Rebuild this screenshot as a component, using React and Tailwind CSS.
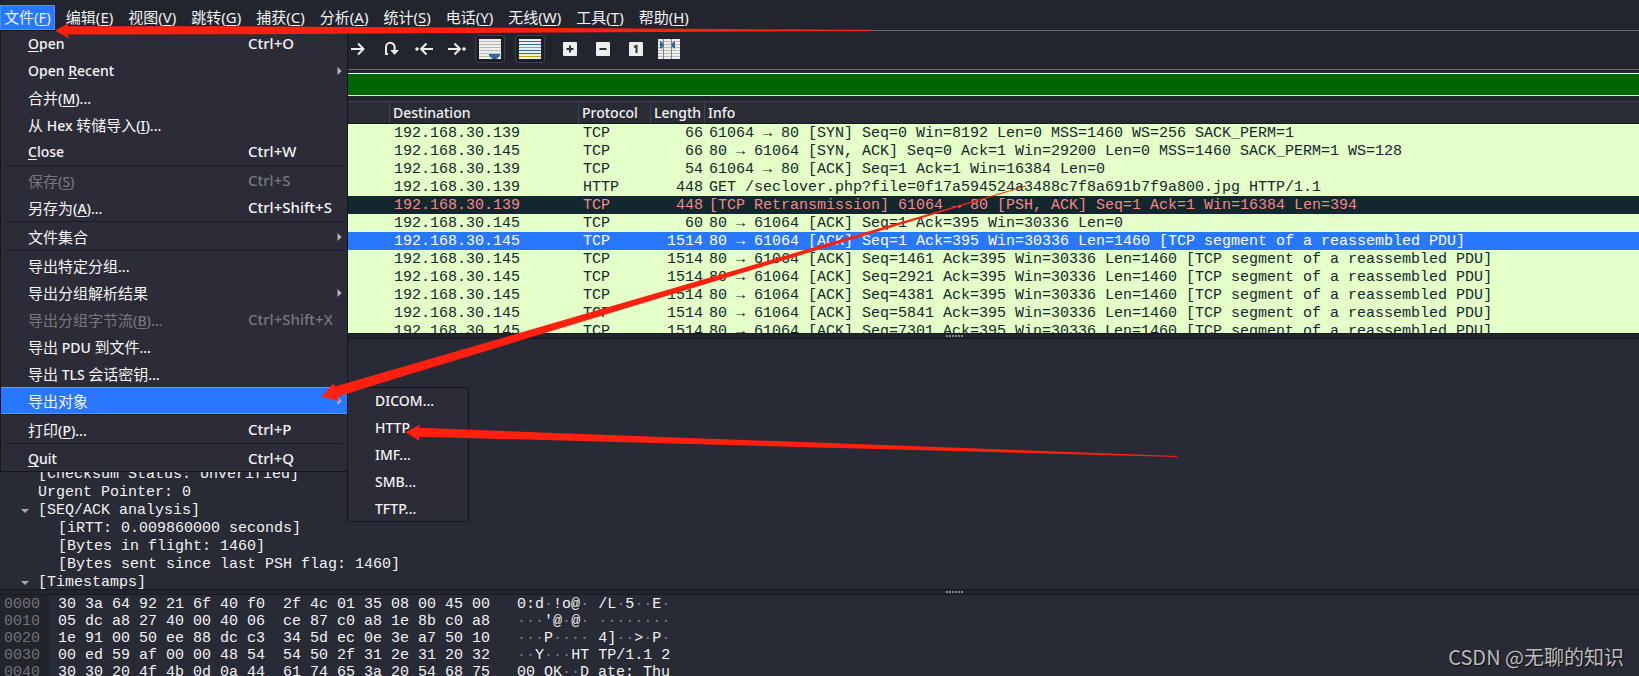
import React from "react";

const UI = "font-['Noto_Sans','Noto_Sans_CJK_SC',sans-serif]";
const MONO = "font-['Liberation_Mono','Noto_Sans_CJK_SC',monospace]";

const menus = [
  ["文件", "F"],
  ["编辑", "E"],
  ["视图", "V"],
  ["跳转", "G"],
  ["捕获", "C"],
  ["分析", "A"],
  ["统计", "S"],
  ["电话", "Y"],
  ["无线", "W"],
  ["工具", "T"],
  ["帮助", "H"],
];

// Underscore marks the mnemonic letter that follows it.
const fileMenu = [
  [
    { label: "_Open", keys: "Ctrl+O" },
    { label: "Open _Recent", sub: true },
    { label: "合并(_M)..." },
    { label: "从 Hex 转储导入(_I)..." },
    { label: "_Close", keys: "Ctrl+W" },
  ],
  [
    { label: "保存(_S)", keys: "Ctrl+S", disabled: true },
    { label: "另存为(_A)...", keys: "Ctrl+Shift+S" },
  ],
  [{ label: "文件集合", sub: true }],
  [
    { label: "导出特定分组..." },
    { label: "导出分组解析结果", sub: true },
    { label: "导出分组字节流(_B)...", keys: "Ctrl+Shift+X", disabled: true },
    { label: "导出 PDU 到文件..." },
    { label: "导出 TLS 会话密钥..." },
    { label: "导出对象", sub: true, active: true },
  ],
  [{ label: "打印(_P)...", keys: "Ctrl+P" }],
  [{ label: "_Quit", keys: "Ctrl+Q" }],
];

const exportMenu = ["DICOM...", "HTTP...", "IMF...", "SMB...", "TFTP..."];

const PDU = "[TCP segment of a reassembled PDU]";
const packets = [
  ["192.168.30.139", "TCP", 66, "61064 → 80 [SYN] Seq=0 Win=8192 Len=0 MSS=1460 WS=256 SACK_PERM=1"],
  ["192.168.30.145", "TCP", 66, "80 → 61064 [SYN, ACK] Seq=0 Ack=1 Win=29200 Len=0 MSS=1460 SACK_PERM=1 WS=128"],
  ["192.168.30.139", "TCP", 54, "61064 → 80 [ACK] Seq=1 Ack=1 Win=16384 Len=0"],
  ["192.168.30.139", "HTTP", 448, "GET /seclover.php?file=0f17a594524a3488c7f8a691b7f9a800.jpg HTTP/1.1"],
  ["192.168.30.139", "TCP", 448, "[TCP Retransmission] 61064 → 80 [PSH, ACK] Seq=1 Ack=1 Win=16384 Len=394", "bad"],
  ["192.168.30.145", "TCP", 60, "80 → 61064 [ACK] Seq=1 Ack=395 Win=30336 Len=0"],
  ["192.168.30.145", "TCP", 1514, `80 → 61064 [ACK] Seq=1 Ack=395 Win=30336 Len=1460 ${PDU}`, "selected"],
  ["192.168.30.145", "TCP", 1514, `80 → 61064 [ACK] Seq=1461 Ack=395 Win=30336 Len=1460 ${PDU}`],
  ["192.168.30.145", "TCP", 1514, `80 → 61064 [ACK] Seq=2921 Ack=395 Win=30336 Len=1460 ${PDU}`],
  ["192.168.30.145", "TCP", 1514, `80 → 61064 [ACK] Seq=4381 Ack=395 Win=30336 Len=1460 ${PDU}`],
  ["192.168.30.145", "TCP", 1514, `80 → 61064 [ACK] Seq=5841 Ack=395 Win=30336 Len=1460 ${PDU}`],
  ["192.168.30.145", "TCP", 1514, `80 → 61064 [ACK] Seq=7301 Ack=395 Win=30336 Len=1460 ${PDU}`],
];

const rowTone = {
  normal: "bg-[#e4ffc7] text-[#12272e]",
  bad: "bg-[#12272e] text-[#f78787]",
  selected: "bg-[#2777ff] text-white",
};

const details = [
  { text: "[Checksum Status: Unverified]", depth: 1 },
  { text: "Urgent Pointer: 0", depth: 1 },
  { text: "[SEQ/ACK analysis]", depth: 1, open: true },
  { text: "[iRTT: 0.009860000 seconds]", depth: 2 },
  { text: "[Bytes in flight: 1460]", depth: 2 },
  { text: "[Bytes sent since last PSH flag: 1460]", depth: 2 },
  { text: "[Timestamps]", depth: 1, open: true },
];

const bytes = [
  ["0000", "30 3a 64 92 21 6f 40 f0  2f 4c 01 35 08 00 45 00", "0:d·!o@· /L·5··E·"],
  ["0010", "05 dc a8 27 40 00 40 06  ce 87 c0 a8 1e 8b c0 a8", "···'@·@· ········"],
  ["0020", "1e 91 00 50 ee 88 dc c3  34 5d ec 0e 3e a7 50 10", "···P···· 4]··>·P·"],
  ["0030", "00 ed 59 af 00 00 48 54  54 50 2f 31 2e 31 20 32", "··Y···HT TP/1.1 2"],
  ["0040", "30 30 20 4f 4b 0d 0a 44  61 74 65 3a 20 54 68 75", "00 OK··D ate: Thu"],
];

// Splits a label into Chinese runs, Latin runs and the underlined mnemonic.
function Label({ text }) {
  return (
    <span className="whitespace-pre">
      {text.split(/(_[A-Z]|[\u4e00-\u9fff]+)/).map((part, i) => {
        if (part.startsWith("_")) {
          return (
            <span key={i} className="underline decoration-1 underline-offset-2">
              {part[1]}
            </span>
          );
        }
        return /[\u4e00-\u9fff]/.test(part) ? (
          <span key={i} className="text-[15px] font-normal">
            {part}
          </span>
        ) : (
          part
        );
      })}
    </span>
  );
}

function MenuBar() {
  return (
    <nav aria-label="主菜单" className="flex h-[31px] shrink-0 items-end gap-[7px] border-b border-[#6c6d73] bg-[#23252e]">
      {menus.map(([name, key], i) => (
        <button
          key={key}
          type="button"
          className={
            "h-[25px] whitespace-nowrap text-[15px] leading-[23px] " +
            (i === 0 ? "border border-[#4d8fff] bg-[#2777ff] px-[3px]" : "border-y border-transparent px-1")
          }
        >
          <Label text={`${name}(_${key})`} />
        </button>
      ))}
    </nav>
  );
}

function FileMenu() {
  return (
    <div role="menu" aria-label="文件" className="absolute top-[30px] left-0 z-10 w-[348px] bg-[#2b2c37] outline-1 -outline-offset-1 outline-[#14151d]">
      {fileMenu.map((group, g) => (
        <div key={g} role="group">
          {g > 0 && <div className="mx-[5px] h-[2px] border-t border-[#1b1c26]" />}
          {group.map((item) => (
            <button
              key={item.label}
              type="button"
              role="menuitem"
              disabled={item.disabled}
              className={
                "flex h-[27px] w-full items-center pr-[6px] pl-7 text-left leading-[25px] font-medium " +
                (item.active ? "border-y border-[#5c97f5] bg-[#2777ff] " : "") +
                (item.disabled ? "text-[#77787d]" : "text-[#f4f4f5]")
              }
            >
              <span className={"w-[220px] text-[14px] " + (/[\u4e00-\u9fff]/.test(item.label) ? "pt-[2px]" : "")}>
                <Label text={item.label} />
              </span>
              <span className="flex-1 text-[15px] whitespace-nowrap">{item.keys}</span>
              {item.sub && (
                <svg viewBox="0 0 5 8" className="h-2 w-[5px] fill-[#b4b5b9]" aria-hidden="true">
                  <path d="M0.5 0 L4.7 4 L0.5 8 Z" />
                </svg>
              )}
            </button>
          ))}
        </div>
      ))}
    </div>
  );
}

function ExportMenu() {
  return (
    <div role="menu" aria-label="导出对象" className="absolute top-[387px] left-[347px] z-10 w-[122px] bg-[#2b2c37] outline-1 -outline-offset-1 outline-[#14151d]">
      {exportMenu.map((label) => (
        <button key={label} type="button" role="menuitem" className="flex h-[27px] w-full items-center pl-7 text-[14px] font-medium text-[#f4f4f5]">
          {label}
        </button>
      ))}
    </div>
  );
}

function ToolButton({ label, pressed, children }) {
  return (
    <button
      type="button"
      aria-label={label}
      className={
        "flex h-7 w-[30px] items-center justify-center rounded-[3px] border " +
        (pressed ? "border-[#3d3f48] bg-[#1d1f27]" : "border-transparent")
      }
    >
      {children}
    </button>
  );
}

function Stroke({ children }) {
  return (
    <svg viewBox="0 0 20 18" className="h-[18px] w-5 fill-none stroke-[#eeeeec] stroke-2" aria-hidden="true">
      {children}
    </svg>
  );
}

function Sheet({ colors, children }) {
  return (
    <svg viewBox="0 0 22 20" className="h-5 w-[22px]" aria-hidden="true">
      <rect width="22" height="20" fill="#eeeeec" />
      {colors.map((c, i) => (
        <rect key={i} x="0" y={2 + i * 3} width="22" height="1" fill={c} />
      ))}
      {children}
    </svg>
  );
}

function Badge({ children }) {
  return (
    <svg viewBox="0 0 14 14" className="size-[14px]" aria-hidden="true">
      <rect width="14" height="14" rx="1" fill="#eeeeec" />
      {children}
    </svg>
  );
}

const grey = ["#babdb6", "#babdb6", "#babdb6", "#babdb6", "#babdb6", "#babdb6"];

function Toolbar() {
  return (
    <div role="toolbar" aria-label="工具栏" className="flex h-[39px] shrink-0 items-start gap-[3px] border-b border-[#6c6d73] bg-[#23252e] pt-1 pl-[343px]">
      <ToolButton label="下一个分组">
        <Stroke>
          <path d="M3 9 H15 M10 3.5 L15.5 9 L10 14.5" />
        </Stroke>
      </ToolButton>
      <ToolButton label="转到分组">
        <Stroke>
          <path d="M4 14 H7 M5 14 V7 A4.3 4.3 0 0 1 13.6 7 V11" />
          <path d="M9.3 10 H17.9 L13.6 15 Z" fill="#eeeeec" stroke="none" />
        </Stroke>
      </ToolButton>
      <ToolButton label="首个分组">
        <Stroke>
          <path d="M19 9 H8 M12.5 3.5 L7 9 L12.5 14.5" />
          <circle cx="3" cy="9" r="1.8" fill="#eeeeec" stroke="none" />
        </Stroke>
      </ToolButton>
      <ToolButton label="最新分组">
        <Stroke>
          <path d="M1 9 H12 M7.5 3.5 L13 9 L7.5 14.5" />
          <circle cx="17" cy="9" r="1.8" fill="#eeeeec" stroke="none" />
        </Stroke>
      </ToolButton>
      <ToolButton label="自动滚动" pressed>
        <Sheet colors={grey}>
          <path d="M10 15 H21 V16.5 L17.5 20 H13.5 L10 16.5 Z" fill="#3465a4" />
        </Sheet>
      </ToolButton>
      <div className="flex w-1 justify-center pt-1"><div className="h-5 w-px bg-[#1b1d25]" /></div>
      <ToolButton label="着色" pressed>
        <Sheet colors={["#e02a2a", "#3465a4", "#73c226", "#3465a4", "#75507b", "#c4a000"]} />
      </ToolButton>
      <div className="flex w-1 justify-center pt-1"><div className="h-5 w-px bg-[#1b1d25]" /></div>
      <ToolButton label="放大">
        <Badge>
          <path d="M3.5 7 H10.5 M7 3.5 V10.5" stroke="#2e3436" strokeWidth="2" />
        </Badge>
      </ToolButton>
      <ToolButton label="缩小">
        <Badge>
          <path d="M3.5 7 H10.5" stroke="#2e3436" strokeWidth="2" />
        </Badge>
      </ToolButton>
      <ToolButton label="正常大小">
        <Badge>
          <path d="M5 5 L7.5 4 V11" stroke="#2e3436" strokeWidth="2" fill="none" />
        </Badge>
      </ToolButton>
      <ToolButton label="调整列宽">
        <Sheet colors={grey}>
          <path d="M5.5 0 V20 M13.5 0 V20" stroke="#7f827c" />
          <path d="M2 2.5 H3.5 L5.5 5 V7 L3.5 9.5 H2 Z M17 2.5 H16 L13.5 5 V7 L16 9.5 H17 Z" fill="#3465a4" />
        </Sheet>
      </ToolButton>
    </div>
  );
}

const th = "h-[23px] border-t border-b border-l border-t-[#3f424b] border-b-[#15171f] border-l-[#41444d] p-0 pl-[3px] text-left text-[14px] leading-[21px] font-medium";

function PacketList() {
  return (
    <div className="h-[232px] shrink-0 overflow-hidden bg-[#282a35]">
      <table className="w-full table-fixed border-separate border-spacing-0">
        <colgroup>
          <col className="w-[389px]" />
          <col className="w-[189px]" />
          <col className="w-[72px]" />
          <col className="w-[54px]" />
          <col />
        </colgroup>
        <thead>
          <tr className="bg-[#292c35]">
            <th className={th} aria-label="Source" />
            <th className={th}>Destination</th>
            <th className={th}>Protocol</th>
            <th className={th}>Length</th>
            <th className={th}>Info</th>
          </tr>
        </thead>
        <tbody className={"text-[15px] leading-[16px] " + MONO}>
          {packets.map(([dest, proto, len, info, tone = "normal"], i) => (
            <tr key={i} className={rowTone[tone]}>
              <td className="h-[18px] p-0" />
              <td className="p-0 pt-[2px] pl-[5px]">{dest}</td>
              <td className="p-0 pt-[2px] pl-[5px]">{proto}</td>
              <td className="p-0 pt-[2px] pr-px text-right">{len}</td>
              <td className="p-0 pt-[2px] pl-[5px] whitespace-nowrap">{info}</td>
            </tr>
          ))}
        </tbody>
      </table>
    </div>
  );
}

function Splitter() {
  return (
    <div role="separator" className="flex h-[6px] shrink-0 items-center gap-px border-y border-[#181a21] bg-[#22242c] pl-[946px]">
      {[0, 1, 2, 3, 4, 5].map((i) => (
        <span key={i} className="size-[2px] bg-[#85868b]" />
      ))}
    </div>
  );
}

function Details() {
  return (
    <div role="tree" aria-label="分组详情" className={"flex min-h-0 flex-1 flex-col justify-end overflow-hidden text-[15px] leading-[16px] " + MONO}>
      <div className="-mb-[2px]">
        {details.map((d) => (
          <div
            key={d.text}
            role="treeitem"
            className={"flex h-[18px] items-center pt-[2px] whitespace-pre " + (d.depth === 2 ? "pl-[58px]" : "pl-5")}
          >
            {d.depth === 1 && (
              <span className="flex w-[18px] pl-px">
                {d.open && (
                  <svg viewBox="0 0 8 4" className="h-1 w-2 fill-[#a9aaae]" aria-hidden="true">
                    <path d="M0 0 H8 L4 4 Z" />
                  </svg>
                )}
              </span>
            )}
            {d.text}
          </div>
        ))}
      </div>
    </div>
  );
}

function Ascii({ text }) {
  return text.split(/(·+)/).map((part, i) => (
    <span key={i} className={part.startsWith("·") ? "text-[#7d7e86]" : ""}>
      {part}
    </span>
  ));
}

function ByteView() {
  return (
    <div className={"flex h-[81px] shrink-0 overflow-hidden text-[15px] leading-[17px] " + MONO}>
      <div className="w-[49px] shrink-0 bg-[#22242c] pt-px pl-1 text-[#717277]">
        {bytes.map(([offset]) => (
          <div key={offset}>{offset}</div>
        ))}
      </div>
      <div className="pt-px pl-[9px] whitespace-pre">
        {bytes.map(([offset, hex, ascii]) => (
          <div key={offset} className="flex gap-[27px]">
            <span>{hex}</span>
            <span>
              <Ascii text={ascii} />
            </span>
          </div>
        ))}
      </div>
    </div>
  );
}

function Arrows() {
  return (
    <svg width="1639" height="676" viewBox="0 0 1639 676" className="pointer-events-none absolute top-0 left-0 z-20 fill-[#ff2010]" aria-hidden="true">
      <path d="M55 30.5 L70 22.5 L67 26.3 L230 26.3 L871 29.8 L871 30.8 L230 34.3 L67 34.6 L70 39.3 Z" />
      <path d="M321.5 396.7 L333.5 383.3 L335 386.5 L360 379.3 L1026 185.6 L1026 186.4 L390 380.2 L337.5 396.8 L339.5 401 Z" />
      <path d="M405.5 432.3 L421 424.3 L418.5 427.8 L1177 456 L1177 457 L418.5 436.7 L420 441.3 Z" />
    </svg>
  );
}

export default function App() {
  return (
    <div className={"relative flex h-screen flex-col overflow-hidden bg-[#282a35] text-[#f2f2f3] " + UI}>
      <MenuBar />
      <Toolbar />
      <div className="shrink-0 bg-[#22242c] pt-[3px] pb-[5px]">
        <input
          aria-label="显示过滤器"
          className="block h-[23px] w-full border-y border-[#f0f0f0] bg-[#006400] px-2 text-[15px] outline-none"
        />
      </div>
      <PacketList />
      <Splitter />
      <Details />
      <Splitter />
      <ByteView />
      <FileMenu />
      <ExportMenu />
      <Arrows />
      <div className="absolute right-[15px] bottom-1 z-20 font-['Noto_Sans_CJK_SC',sans-serif] text-[20px] leading-[30px] text-[#b9babc] [text-shadow:1px_1px_1px_#111]">
        CSDN @无聊的知识
      </div>
    </div>
  );
}
